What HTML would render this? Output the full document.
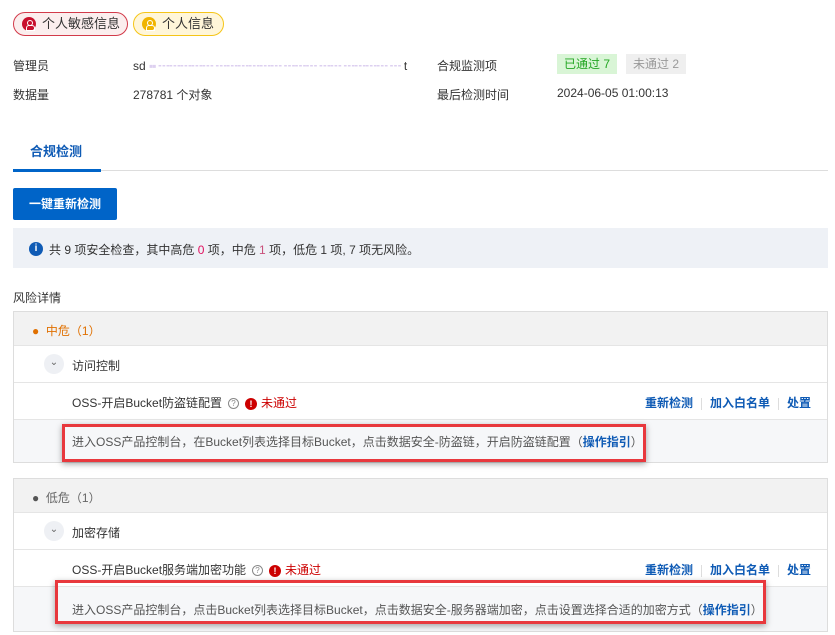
<!DOCTYPE html>
<html><head><meta charset="utf-8"><style>
*{margin:0;padding:0;box-sizing:border-box}
body{width:835px;height:635px;background:#fff;font-family:"Liberation Sans","Noto Sans CJK SC",sans-serif;font-size:12px;color:#333;position:relative;overflow:hidden}
.a{position:absolute;white-space:nowrap}
.tag{position:absolute;top:12px;height:24px;border-radius:12px;line-height:22px;font-size:13px;padding-left:28px}
.tag i{position:absolute;left:8px;top:4px;width:14px;height:14px;border-radius:50%}
.tag i:before{content:"";position:absolute;left:5px;top:2.5px;width:4px;height:4px;border:1.2px solid #fff;border-radius:50%}
.tag i:after{content:"";position:absolute;left:3.5px;top:8px;width:7px;height:3.5px;border:1.2px solid #fff;border-radius:3px 3px 0 0}
.panel{position:absolute;left:13px;width:815px;border:1px solid #ddd}
.hd{height:34px;background:#f2f2f2;border-bottom:1px solid #e5e5e5;position:relative}
.sub{height:37px;border-bottom:1px solid #e5e5e5;position:relative}
.item{height:37px;border-bottom:1px solid #e5e5e5;position:relative}
.desc{background:#f6f7f9;position:relative}
.chev{position:absolute;left:30px;top:8px;width:20px;height:20px;border-radius:50%;background:#eef0f4;color:#666;font-size:10px;text-align:center;line-height:18px}
.lk{color:#0f5bb5;font-weight:bold;font-size:12px}
.sep{display:inline-block;width:1px;height:12px;background:#ddd;margin:0 8px;vertical-align:middle}
.red{position:absolute;border:3px solid #e8383d;box-shadow:0 2px 6px rgba(0,0,0,.35)}
.q{display:inline-block;width:11px;height:11px;border:1px solid #888;border-radius:50%;font-size:8px;line-height:9px;text-align:center;color:#888;vertical-align:middle;margin:0 6px}
.ex{display:inline-block;width:12px;height:12px;border-radius:50%;background:#c00;color:#fff;font-size:9px;font-weight:bold;line-height:12px;text-align:center;vertical-align:middle;margin-right:4px}
</style></head><body>
<div class="tag" style="left:13px;width:115px;background:#fbeeee;border:1px solid #d23a4a;color:#333"><i style="background:#c8102e"></i>个人敏感信息</div>
<div class="tag" style="left:133px;width:91px;background:#fff6d9;border:1px solid #f5c518;color:#333"><i style="background:#f0b400"></i>个人信息</div>

<div class="a" style="left:13px;top:57px">管理员</div>
<div class="a" style="left:133px;top:57px">sd <span style="color:#ddd0f0;letter-spacing:-1px">▪▪ ┅┅┅┅┅ ┅┅┅┅┅┅ ┅┅┅ ┅┅ ┅┅┅┅ ┅</span> t</div>
<div class="a" style="left:13px;top:86px">数据量</div>
<div class="a" style="left:133px;top:86px">278781 个对象</div>
<div class="a" style="left:437px;top:57px">合规监测项</div>
<div class="a" style="left:557px;top:54px;background:#d9f5d6;color:#23a623;padding:0 7px;line-height:20px">已通过 7</div>
<div class="a" style="left:626px;top:54px;background:#efefef;color:#999;padding:0 7px;line-height:20px">未通过 2</div>
<div class="a" style="left:437px;top:86px">最后检测时间</div>
<div class="a" style="left:557px;top:86px">2024-06-05 01:00:13</div>

<div class="a" style="left:30px;top:141px;color:#0f5bb5;font-weight:bold;font-size:13px">合规检测</div>
<div class="a" style="left:13px;top:170px;width:815px;height:1px;background:#ddd"></div>
<div class="a" style="left:13px;top:169px;width:88px;height:3px;background:#0064c8"></div>

<div class="a" style="left:13px;top:188px;width:104px;height:32px;background:#0064c8;border-radius:2px;color:#fff;font-weight:bold;line-height:32px;text-align:center">一键重新检测</div>

<div class="a" style="left:13px;top:228px;width:815px;height:40px;background:#eef1f6"></div>
<div class="a" style="left:29px;top:242px;width:14px;height:14px;border-radius:50%;background:#0f5bb5;color:#fff;font-size:10px;font-weight:bold;text-align:center;line-height:14px">i</div>
<div class="a" style="left:49px;top:241px">共 9 项安全检查，其中高危 <span style="color:#e0115f">0</span> 项，中危 <span style="color:#c9507a">1</span> 项，低危 1 项, 7 项无风险。</div>

<div class="a" style="left:13px;top:289px">风险详情</div>

<div class="panel" style="top:311px">
 <div class="hd"><span class="a" style="left:18px;top:10px;color:#e07000">●&nbsp; 中危（1）</span></div>
 <div class="sub"><div class="chev">⌄</div><span class="a" style="left:58px;top:11px">访问控制</span></div>
 <div class="item"><span class="a" style="left:58px;top:11px">OSS-开启Bucket防盗链配置<span class="q">?</span><span class="ex">!</span><span style="color:#c00">未通过</span></span>
  <span class="a" style="right:16px;top:11px"><span class="lk">重新检测</span><span class="sep"></span><span class="lk">加入白名单</span><span class="sep"></span><span class="lk">处置</span></span></div>
 <div class="desc" style="height:42px"><span class="a" style="left:58px;top:13px;color:#555">进入OSS产品控制台，在Bucket列表选择目标Bucket，点击数据安全-防盗链，开启防盗链配置（<span class="lk" style="font-weight:bold">操作指引</span>）</span></div>
</div>
<div class="red" style="left:62px;top:424px;width:584px;height:38px"></div>

<div class="panel" style="top:478px">
 <div class="hd"><span class="a" style="left:18px;top:10px;color:#666"><span style="color:#555">●</span>&nbsp; 低危（1）</span></div>
 <div class="sub"><div class="chev">⌄</div><span class="a" style="left:58px;top:11px">加密存储</span></div>
 <div class="item"><span class="a" style="left:58px;top:11px">OSS-开启Bucket服务端加密功能<span class="q">?</span><span class="ex">!</span><span style="color:#c00">未通过</span></span>
  <span class="a" style="right:16px;top:11px"><span class="lk">重新检测</span><span class="sep"></span><span class="lk">加入白名单</span><span class="sep"></span><span class="lk">处置</span></span></div>
 <div class="desc" style="height:44px"><span class="a" style="left:58px;top:14px;color:#555">进入OSS产品控制台，点击Bucket列表选择目标Bucket，点击数据安全-服务器端加密，点击设置选择合适的加密方式（<span class="lk">操作指引</span>）</span></div>
</div>
<div class="red" style="left:55px;top:580px;width:711px;height:44px"></div>
</body></html>
